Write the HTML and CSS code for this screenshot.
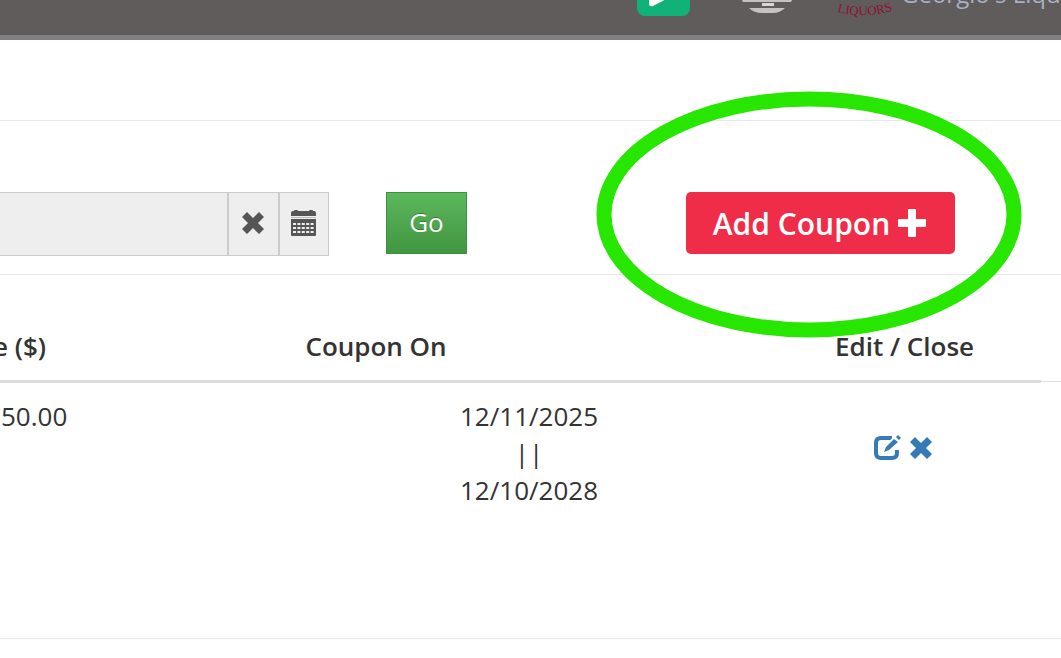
FILE: index.html
```html
<!DOCTYPE html>
<html lang="en">
<head>
<meta charset="utf-8">
<title>Coupons</title>
<link rel="stylesheet" href="styles.css">
</head>
<body>
<header class="topbar">
  <button class="play" type="button" aria-label="Play"><svg width="53" height="48" viewBox="0 0 53 48"><path d="M12 9Q12 6 15 8L39 22Q41 24 39 26L16 38Q12 39 12 35Z" fill="#fff"/></svg></button>
  <svg class="bell" width="50" height="48" viewBox="0 0 50 48"><path d="M0 35h50l-1 2H1z" fill="#c4c2c2"/><path d="M20 38h12v3H20z" fill="#d8d7d7"/><path d="M7 43h36q-5 5-12 5H20q-8 0-13-5z" fill="#c4c2c2"/></svg>
  <svg class="logo" width="54" height="48" viewBox="0 0 54 48"><path id="arc" d="M1 39Q27 46 55 38" fill="none"/><text class="logo-text"><textPath href="#arc">LIQUORS</textPath></text></svg>
  <a class="account" href="#">Georgio's Liquors</a>
</header>
<main class="page">
  <section class="title-row"></section>
  <form class="filters">
    <div class="date-group">
      <input class="date" type="text" aria-label="Date range" readonly>
      <button class="addon clear" type="button" aria-label="Clear"><svg width="22" height="22" viewBox="0 0 22 22"><path d="M5 0L11 6 17 0 22 5 16 11 22 17 17 22 11 16 5 22 0 17 6 11 0 5Z" fill="#555"/></svg></button>
      <button class="addon" type="button" aria-label="Calendar"><svg width="26" height="26" viewBox="0 0 26 26"><path d="M1 6V3Q1 1 3 1H4Q4 0 5 0H7Q8 0 8 1H19Q19 0 20 0H22Q23 0 23 1H24Q26 1 26 3V6Z" fill="#555"/><path d="M1 7.500H26" stroke="#bbb"/><path d="M1 9H26V25Q26 26 25 26H2Q1 26 1 25Z" fill="#555"/><path d="M3 14H24M3 18H24M3 22H24" stroke="#eee" stroke-width="2.200" stroke-dasharray="3 1.400"/></svg></button>
    </div>
    <button class="go" type="button">Go</button>
    <div class="add-wrap">
      <button class="add" type="button">Add Coupon <svg width="28" height="28" viewBox="0 0 28 28"><path d="M11 0H17Q18 0 18 1V10H27Q28 10 28 11V17Q28 18 27 18H18V27Q18 28 17 28H11Q10 28 10 27V18H1Q0 18 0 17V11Q0 10 1 10H10V1Q10 0 11 0Z" fill="#fff"/></svg></button>
      <svg class="ring" width="426" height="248" viewBox="0 0 426 248"><ellipse cx="213" cy="123.500" rx="205" ry="115.500" fill="none" stroke="#27e600" stroke-width="15"/></svg>
    </div>
  </form>
  <section class="list">
    <table class="coupons">
      <thead><tr><th class="value">e ($)</th><th class="on">Coupon On</th><th class="dates"></th><th class="act">Edit / Close</th></tr></thead>
      <tbody><tr><td class="value">50.00</td><td class="on"></td><td class="dates">12/11/2025<br><span class="sep">||</span><br>12/10/2028</td>
      <td class="act"><div class="icons">
        <a href="#" aria-label="Edit"><svg width="28" height="26" viewBox="0 0 28 26"><path d="M18 3H7Q2 3 2 8V18Q2 23 7 23H18Q23 23 23 18V15" fill="none" stroke="#337ab7" stroke-width="4"/><path d="M17 6L22 0M21 11L27 5" stroke="#fff" stroke-width="2"/><path d="M10 17L12 12 20 4 24 7 15 15ZM22 2L24 0 27 3 25 5Z" fill="#337ab7"/></svg></a>
        <a href="#" aria-label="Close"><svg width="22" height="22" viewBox="0 0 22 22"><path d="M5 0L11 6 17 0 22 5 16 11 22 17 17 22 11 16 5 22 0 17 6 11 0 5Z" fill="#337ab7"/></svg></a>
      </div></td></tr></tbody>
    </table>
  </section>
</main>
</body>
</html>
```
FILE: styles.css
```css
* { box-sizing: border-box; }
body { margin: 0; background: #fff; color: #333; font: 26px/37px "Open Sans", sans-serif; overflow-x: hidden; }
button { font: inherit; cursor: pointer; }
svg { display: block; }
.topbar { height: 40px; display: flex; align-items: flex-end; background: #615c5c; border-bottom: 5px solid #828181; overflow: hidden; padding-left: 637px; white-space: nowrap; }
.play { flex: none; width: 53px; height: 48px; padding: 0; border: 0; border-radius: 8px; background: #10b277; margin: 0 52px 19px 0; }
.bell { flex: none; margin: 0 44px 22px 0; }
.logo { flex: none; margin: 0 11px 14px 0; overflow: visible; }
.logo-text { font: 13px "Liberation Serif", serif; fill: #8c1230; }
.account { color: #a7b1c2; font-size: 24px; text-decoration: none; margin-bottom: 23px; }
.title-row { height: 81px; border-bottom: 1px solid #e7eaec; }
.filters { display: flex; align-items: flex-start; padding: 71px 106px 18px 0; border-bottom: 1px solid #e7eaec; }
.date-group { display: flex; width: 329px; height: 64px; }
.date { flex: 1; min-width: 0; border: 1px solid #ccc; border-width: 1px 1px 1px 0; background: #eee; font: inherit; }
.addon { display: flex; align-items: center; justify-content: center; width: 50px; padding: 0 2px 2px 0; border: 1px solid #ccc; background: #eee; }
.clear { width: 51px; }
.go { margin-left: 57px; width: 81px; height: 62px; padding: 0 0 2px; border: 1px solid #3e8f3e; background: linear-gradient(#5cb85c, #419641); color: #fff; text-shadow: 0 -1px 0 rgba(0, 0, 0, .3); }
.add-wrap { position: relative; margin-left: auto; }
.add { display: flex; align-items: center; justify-content: center; gap: 8px; width: 269px; height: 62px; padding: 0 2px 0 0; border: 0; border-radius: 5px; background: #f02d48; color: #fff; font-size: 30px; font-weight: 600; }
.ring { position: absolute; left: -90px; top: -101px; pointer-events: none; }
.list { position: relative; padding: 53px 20px 0 0; border-bottom: 1px solid #e7eaec; }
.list::after { content: ""; position: absolute; top: 106px; right: 0; width: 20px; border-top: 1px solid #ddd; }
.coupons { width: calc(100% + 7px); margin-left: -7px; border-collapse: collapse; table-layout: fixed; }
th, td { padding: 0; vertical-align: top; text-align: center; }
th { font-weight: 600; padding-bottom: 15px; border-bottom: 3px solid #ddd; }
td { padding-top: 15px; padding-bottom: 129px; }
.value { width: 312px; text-align: left; }
td.value { padding-left: 8px; }
.on { width: 142px; }
.dates { width: 164px; }
.act { padding-left: 157px; }
.icons { display: flex; align-items: center; justify-content: center; gap: 8px; padding: 37px 3px 0 0; }
```
